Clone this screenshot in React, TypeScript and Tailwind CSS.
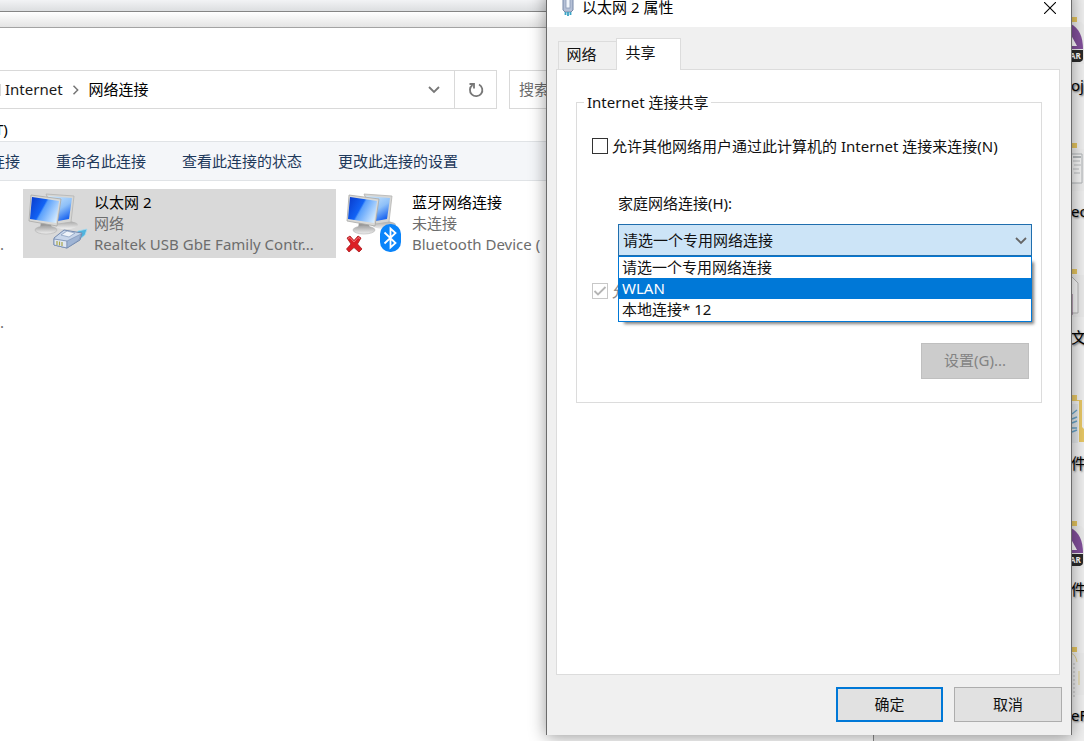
import {useState} from 'react';

const CONNECTION_OPTIONS = ['请选一个专用网络连接', 'WLAN', '本地连接* 12'];

const COMMANDS = ['连接', '重命名此连接', '查看此连接的状态', '更改此连接的设置'];

type ShortcutKind = 'rar' | 'doc' | 'page' | 'folder' | 'sheet';

const SHORTCUTS: {label: string; kind: ShortcutKind}[] = [
    {label: 'oje', kind: 'rar'},
    {label: 'ec', kind: 'doc'},
    {label: '文(', kind: 'page'},
    {label: '件', kind: 'folder'},
    {label: '件', kind: 'rar'},
    {label: 'eF', kind: 'sheet'},
];

function Monitors({id}: {id: string}) {
    return (
        <>
            <defs>
                <linearGradient id={`${id}-front`} x1="0" y1="0.2" x2="1" y2="0.7">
                    <stop offset="0" stopColor="#0a3fd0" />
                    <stop offset="0.42" stopColor="#1263f5" />
                    <stop offset="0.48" stopColor="#5aa0fb" />
                    <stop offset="1" stopColor="#d4ebff" />
                </linearGradient>
                <linearGradient id={`${id}-back`} x1="0" y1="0" x2="0.6" y2="1">
                    <stop offset="0" stopColor="#d3eafc" />
                    <stop offset="0.6" stopColor="#8ec0f8" />
                    <stop offset="1" stopColor="#1f68f0" />
                </linearGradient>
                <linearGradient id={`${id}-base`} x1="0" y1="0" x2="0" y2="1">
                    <stop offset="0" stopColor="#a5a5a5" />
                    <stop offset="1" stopColor="#f0f0f0" />
                </linearGradient>
            </defs>
            <ellipse cx="38" cy="33" rx="12" ry="4" fill={`url(#${id}-base)`} />
            <path d="M18 2 L46 4 L43 30 L30 32 Z" fill="#d6d6d4" stroke="#b4b4b2" strokeWidth="0.8" />
            <path d="M20 4 L44 6 L41 27 L30 29 Z" fill={`url(#${id}-back)`} />
            <path d="M13 30 L23 32 L24 37 L12 37 Z" fill="#989898" />
            <ellipse cx="18" cy="38" rx="11" ry="4" fill={`url(#${id}-base)`} stroke="#b0b0b0" strokeWidth="0.6" />
            <path d="M3 3 L33 7 L29 34 L1 29 Z" fill="#d9d9d7" stroke="#a8a8a6" strokeWidth="0.8" />
            <path d="M4 5 L31 9 L28 31 L2 27 Z" fill={`url(#${id}-front)`} />
        </>
    );
}

function EthernetIcon() {
    return (
        <svg width="64" height="62" viewBox="0 0 64 62" aria-hidden="true">
            <Monitors id="eth" />
            <path d="M46 45 L50 39 L59 37 L57 43 L51 48 Z" fill="#4fb4de" stroke="#a8d8ec" strokeWidth="0.8" />
            <path d="M26 46 L36 38 L54 41 L52 48 L39 56 L26 53 Z" fill="#c8d6ea" stroke="#7289ae" strokeWidth="1" />
            <path d="M26 47 L39 49 L39 56 L26 53 Z" fill="#dfe7f2" stroke="#7289ae" strokeWidth="0.8" />
            <path d="M39 49 L53 42 L51 48 L39 56 Z" fill="#9fb4d4" stroke="#7289ae" strokeWidth="0.6" />
            <path d="M33 43 L39 39 L47 41 L41 45 Z" fill="#eef3f9" stroke="#8399bb" strokeWidth="0.7" />
            <path d="M29 49 V53 M31.5 49.5 V53.5 M34 50 V54" stroke="#aaa54a" strokeWidth="1.2" />
        </svg>
    );
}

function BluetoothIcon() {
    return (
        <svg width="64" height="62" viewBox="0 0 64 62" aria-hidden="true">
            <Monitors id="bt" />
            <rect x="34" y="32" width="21" height="28" rx="10" fill="#0a84fa" />
            <path
                d="M38.5 40.5 L49.500 51 L44.500 55.500 V36.500 L49.500 41 L38.5 51.500"
                fill="none"
                stroke="#fff"
                strokeWidth="1.800"
            />
            <path
                d="M1 46 L4 44 L8 48.500 L12 44 L15 46 L11.500 52 L16 57 L13 60 L8 55.500 L3 60 L0.500 57 L5 52 Z"
                fill="#dc1f26"
                stroke="#a8191d"
                strokeWidth="0.8"
            />
            <path d="M2 46.500 L4 45.500 L8 50 L12 45.500 L14 46.500" fill="none" stroke="#f0767a" strokeWidth="1" />
        </svg>
    );
}

function PlugIcon() {
    return (
        <svg width="12" height="20" viewBox="0 0 12 20" aria-hidden="true">
            <path d="M1 0 H11 V12 L9 14 H3 L1 12 Z" fill="#b5c0d6" stroke="#7788a8" strokeWidth="1" />
            <rect x="4" y="1" width="4" height="9" fill="#f1f5fb" stroke="#8a99b6" strokeWidth="0.8" />
            <path d="M3.500 14 V17 M6 14 V18 M8.500 14 V17" stroke="#3aa3c4" strokeWidth="1.800" />
        </svg>
    );
}

function Chevron({className}: {className: string}) {
    return (
        <svg width="12" height="8" viewBox="0 0 12 8" fill="none" stroke="currentColor" className={className} aria-hidden="true">
            <path d="M1 1 L6 6 L11 1" strokeWidth="1.800" />
        </svg>
    );
}

function ShortcutArt({kind}: {kind: ShortcutKind}) {
    return (
        <svg width="13" height="56" viewBox="0 0 13 56" className="shrink-0" aria-hidden="true">
            <rect x="0" y="0" width="6" height="5" fill="#e5c560" />
            {kind === 'rar' && (
                <>
                    <path d="M0 5 H10 L13 8 V47 H0 Z" fill="#ececec" />
                    <path d="M0 7 C8 11 12 20 12 32 H0 Z" fill="#82509b" />
                    <path d="M0 18 L6 29 H0 Z" fill="#fff" />
                    <path d="M0 33 H12 V42 Q12 44 9 45 H0 Z" fill="#2b2b2b" />
                    <text x="-1" y="42" fontSize="8" fontWeight="700" fill="#fff" fontFamily="Open Sans, sans-serif">
                        AR
                    </text>
                </>
            )}
            {kind === 'doc' && (
                <>
                    <path d="M0 6 H13 V48 H0 Z" fill="#ededed" />
                    <path d="M1 11 H11 V40 H1" fill="#f5f5f5" stroke="#b0b4b7" />
                    <path d="M2 14 H10" stroke="#777e83" />
                    <path d="M2 18 H9 M3 22 H10 M2 26 H8 M3 30 H9" stroke="#bbbec0" />
                </>
            )}
            {kind === 'page' && (
                <>
                    <path d="M0 6 H13 V48 H0 Z" fill="#ebebeb" />
                    <path d="M0 7 L7 14 V44 H0" fill="#f8f8f8" stroke="#b5b5b5" />
                    <path d="M0.500 25 V46" stroke="#80557d" strokeWidth="2" />
                </>
            )}
            {kind === 'folder' && (
                <>
                    <path d="M0 0 H6 V5 H11 V32 L13 34 V47 H8 V6 H0 Z" fill="#e8c866" />
                    <path d="M0 9 H7 V48 H0 Z" fill="#e2e6e8" />
                    <path d="M1 19 L6 15 M1 24 L6 22 M1 28 L6 26 M1 33 H6 M1 37 L6 35" stroke="#6aa5c9" strokeWidth="1.500" />
                </>
            )}
            {kind === 'sheet' && (
                <>
                    <path d="M0 6 H13 V48 H0 Z" fill="#ececec" />
                    <path d="M0 6 Q5 8 6 15 M8 24 V38" fill="none" stroke="#e2d08b" />
                    <path d="M3 16 V50" stroke="#d4d4d4" strokeWidth="2" strokeDasharray="2 2" />
                </>
            )}
        </svg>
    );
}

function Shortcuts() {
    return (
        <div className="absolute right-0 top-[17px] w-[13px] overflow-hidden">
            {SHORTCUTS.map((item, i) => (
                <div key={i} className="flex h-[126px] flex-col">
                    <ShortcutArt kind={item.kind} />
                    <span className="whitespace-nowrap leading-6 text-black [text-shadow:1px_1px_2px_#555]">{item.label}</span>
                </div>
            ))}
        </div>
    );
}

interface ConnectionProps {
    icon: React.ReactNode;
    name: string;
    status: string;
    device: string;
    selected?: boolean;
}

function Connection({icon, name, status, device, selected}: ConnectionProps) {
    return (
        <div className={`flex h-[69px] items-start pl-[5px] pt-[3px] leading-[21px] ${selected ? 'bg-[#d9d9d9]' : ''}`}>
            <div className="w-[66px] shrink-0">{icon}</div>
            <div className="min-w-0 text-[#6d6d6d]">
                <div className="text-black">{name}</div>
                <div>{status}</div>
                <div className="whitespace-nowrap">{device}</div>
            </div>
        </div>
    );
}

function ExplorerWindow() {
    return (
        <div className="absolute inset-y-0 left-0 right-[210px] flex flex-col overflow-hidden border-r border-[#8c8c8c] bg-white">
            <div className="h-3 shrink-0 border-b border-[#858585] bg-linear-to-b from-[#f2f3f5] to-[#dcdee0]" />
            <div className="h-4 shrink-0 border-b border-[#a3a3a3] bg-linear-to-b from-white to-[#e4e4e4]" />
            <div className="mt-[42px] flex h-[39px] shrink-0">
                <div className="flex w-[497px] border border-l-0 border-[#d9d9d9]">
                    <nav className="flex flex-1 items-center">
                        <span className="h-3 w-px bg-[#d9d9d9]" />
                        <a href="#internet" className="ml-1 text-[#1a1a1a]">Internet</a>
                        <Chevron className="mx-2 w-[10px] -rotate-90 text-[#777]" />
                        <a href="#connections" className="text-black">网络连接</a>
                    </nav>
                    <button type="button" aria-label="展开" className="flex w-10 items-center justify-center text-[#777]">
                        <Chevron className="" />
                    </button>
                    <button type="button" aria-label="刷新" className="flex w-[42px] items-center justify-center border-l border-[#d9d9d9]">
                        <svg width="16" height="16" viewBox="0 0 16 16" fill="none" stroke="#777" strokeWidth="1.800" aria-hidden="true">
                            <path d="M11 2.500 A6.200 6.200 0 1 1 4.500 3 M1.500 2 H6 V6.500" />
                        </svg>
                    </button>
                </div>
                <input
                    type="text"
                    aria-label="搜索"
                    placeholder="搜索"
                    className="ml-3 min-w-0 flex-1 border border-[#d9d9d9] px-[9px] outline-none placeholder:text-[#6d6d6d]"
                />
            </div>
            <div className="flex h-8 shrink-0 items-end pb-[2px]">
                <button type="button" className="-ml-[5px] leading-5 text-black">T)</button>
            </div>
            <div className="flex h-10 shrink-0 items-center gap-9 border-y border-[#e0e3e6] bg-[#f4f6f9] text-[#1e395b]">
                {COMMANDS.map((command) => (
                    <button key={command} type="button" className="shrink-0 first:-ml-[10px]">
                        {command}
                    </button>
                ))}
            </div>
            <div className="mt-2 grid grid-cols-[18px_313px_313px] gap-x-[5px] gap-y-[9px] text-[#6d6d6d]">
                <div className="flex h-[69px] items-end pb-[3px] leading-[21px]">.</div>
                <Connection
                    icon={<EthernetIcon />}
                    name="以太网 2"
                    status="网络"
                    device="Realtek USB GbE Family Contr..."
                    selected
                />
                <Connection icon={<BluetoothIcon />} name="蓝牙网络连接" status="未连接" device="Bluetooth Device (" />
                <div className="flex h-[69px] items-end pb-[3px] leading-[21px]">.</div>
            </div>
        </div>
    );
}

function ConnectionSelect() {
    const [active, setActive] = useState(1);

    return (
        <div className="relative">
            <select
                id="home-connection"
                className="block h-8 w-full appearance-none border border-[#1f6eae] bg-[#cce4f7] px-1 text-[#111] outline-none"
            >
                {CONNECTION_OPTIONS.map((option) => (
                    <option key={option}>{option}</option>
                ))}
            </select>
            <Chevron className="pointer-events-none absolute right-[5px] top-[13px] text-[#666]" />
            <ul
                role="listbox"
                aria-label="家庭网络连接"
                className="absolute inset-x-0 top-full z-10 border border-[#0078d7] bg-white pb-px shadow-[4px_4px_3px_-2px_rgba(0,0,0,0.5)]"
            >
                {CONNECTION_OPTIONS.map((option, i) => (
                    <li
                        key={option}
                        role="option"
                        aria-selected={i === active}
                        onMouseEnter={() => setActive(i)}
                        className={`px-[3px] leading-[21px] ${i === active ? 'bg-[#0078d7] text-white' : 'text-[#111]'}`}
                    >
                        {option}
                    </li>
                ))}
            </ul>
        </div>
    );
}

function CheckBox({id, label, checked, disabled}: {id: string; label: string; checked?: boolean; disabled?: boolean}) {
    return (
        <div className="flex h-[22px] items-center gap-1">
            <span className="relative flex">
                <input
                    id={id}
                    type="checkbox"
                    defaultChecked={checked}
                    disabled={disabled}
                    className="peer size-4 appearance-none border border-[#333] bg-white disabled:border-[#c8c8c8]"
                />
                <svg
                    viewBox="0 0 16 16"
                    fill="none"
                    stroke="#b5b5b5"
                    strokeWidth="1.800"
                    className="pointer-events-none absolute inset-0 hidden peer-checked:block"
                    aria-hidden="true"
                >
                    <path d="M2.500 8 L6 11.500 L13.500 4" />
                </svg>
            </span>
            <label htmlFor={id} className={`whitespace-nowrap ${disabled ? 'text-[#8a8a8a]' : ''}`}>
                {label}
            </label>
        </div>
    );
}

function PropertiesDialog() {
    return (
        <div
            role="dialog"
            aria-label="以太网 2 属性"
            className="absolute -top-[11px] bottom-[6px] left-[546px] right-[12px] flex flex-col border-x border-[#6b6b6b] bg-[#f0f0f0] text-[#111] shadow-[0_2px_16px_rgba(0,0,0,0.4)]"
        >
            <div className="flex h-[38px] shrink-0 items-center bg-white px-[15px] pb-px text-black">
                <PlugIcon />
                <h1 className="ml-2 flex-1">以太网 2 属性</h1>
                <button type="button" aria-label="关闭">
                    <svg width="12" height="12" viewBox="0 0 12 12" stroke="#000" strokeWidth="1.100" aria-hidden="true">
                        <path d="M0 0 L12 12 M12 0 L0 12" />
                    </svg>
                </button>
            </div>
            <div className="flex flex-1 flex-col pl-[9px] pr-[11px] pt-[11px]">
                <div role="tablist" className="relative flex h-8 items-end pl-[2px]">
                    <button
                        type="button"
                        role="tab"
                        aria-selected="false"
                        className="h-[29px] w-[58px] border border-r-0 border-[#dcdcdc] pb-[2px] pr-3 text-center"
                    >
                        网络
                    </button>
                    <button
                        type="button"
                        role="tab"
                        aria-selected="true"
                        className="h-8 w-[65px] border border-b-0 border-[#dcdcdc] bg-white pb-1 pr-4 text-center"
                    >
                        共享
                    </button>
                </div>
                <div role="tabpanel" className="-mt-px flex-1 border border-[#dcdcdc] bg-white pl-[19px] pr-[17px] pt-[21px]">
                    <fieldset className="border border-[#dcdcdc] pb-[23px] pl-[15px] pr-[9px]">
                        <legend className="-ml-2 px-[3px] leading-[22px]">Internet 连接共享</legend>
                        <div className="pt-[22px]">
                            <CheckBox id="share" label="允许其他网络用户通过此计算机的 Internet 连接来连接(N)" />
                        </div>
                        <div className="mt-[35px] pl-[26px]">
                            <label htmlFor="home-connection" className="mb-[10px] block leading-[22px]">
                                家庭网络连接(H):
                            </label>
                            <ConnectionSelect />
                        </div>
                        <div className="mt-6">
                            <CheckBox id="control" label="允" checked disabled />
                        </div>
                        <div className="mt-[41px] flex justify-end pr-[3px]">
                            <button type="button" disabled className="h-9 w-[108px] border border-[#bfbfbf] bg-[#cccccc] pb-[2px] text-[#838383]">
                                设置(G)...
                            </button>
                        </div>
                    </fieldset>
                </div>
            </div>
            <div className="flex shrink-0 justify-end gap-[11px] pb-[13px] pr-[9px] pt-3">
                <button type="button" className="h-[35px] w-[107px] border-2 border-[#0078d7] bg-[#e1e1e1]">
                    确定
                </button>
                <button type="button" className="h-[35px] w-[108px] border border-[#adadad] bg-[#e1e1e1]">
                    取消
                </button>
            </div>
        </div>
    );
}

export default function App() {
    return (
        <main className="relative h-screen overflow-hidden bg-[#f0f0f0] font-['Noto_Sans','Noto_Sans_CJK_SC',sans-serif] text-[15px]">
            <Shortcuts />
            <ExplorerWindow />
            <PropertiesDialog />
        </main>
    );
}
